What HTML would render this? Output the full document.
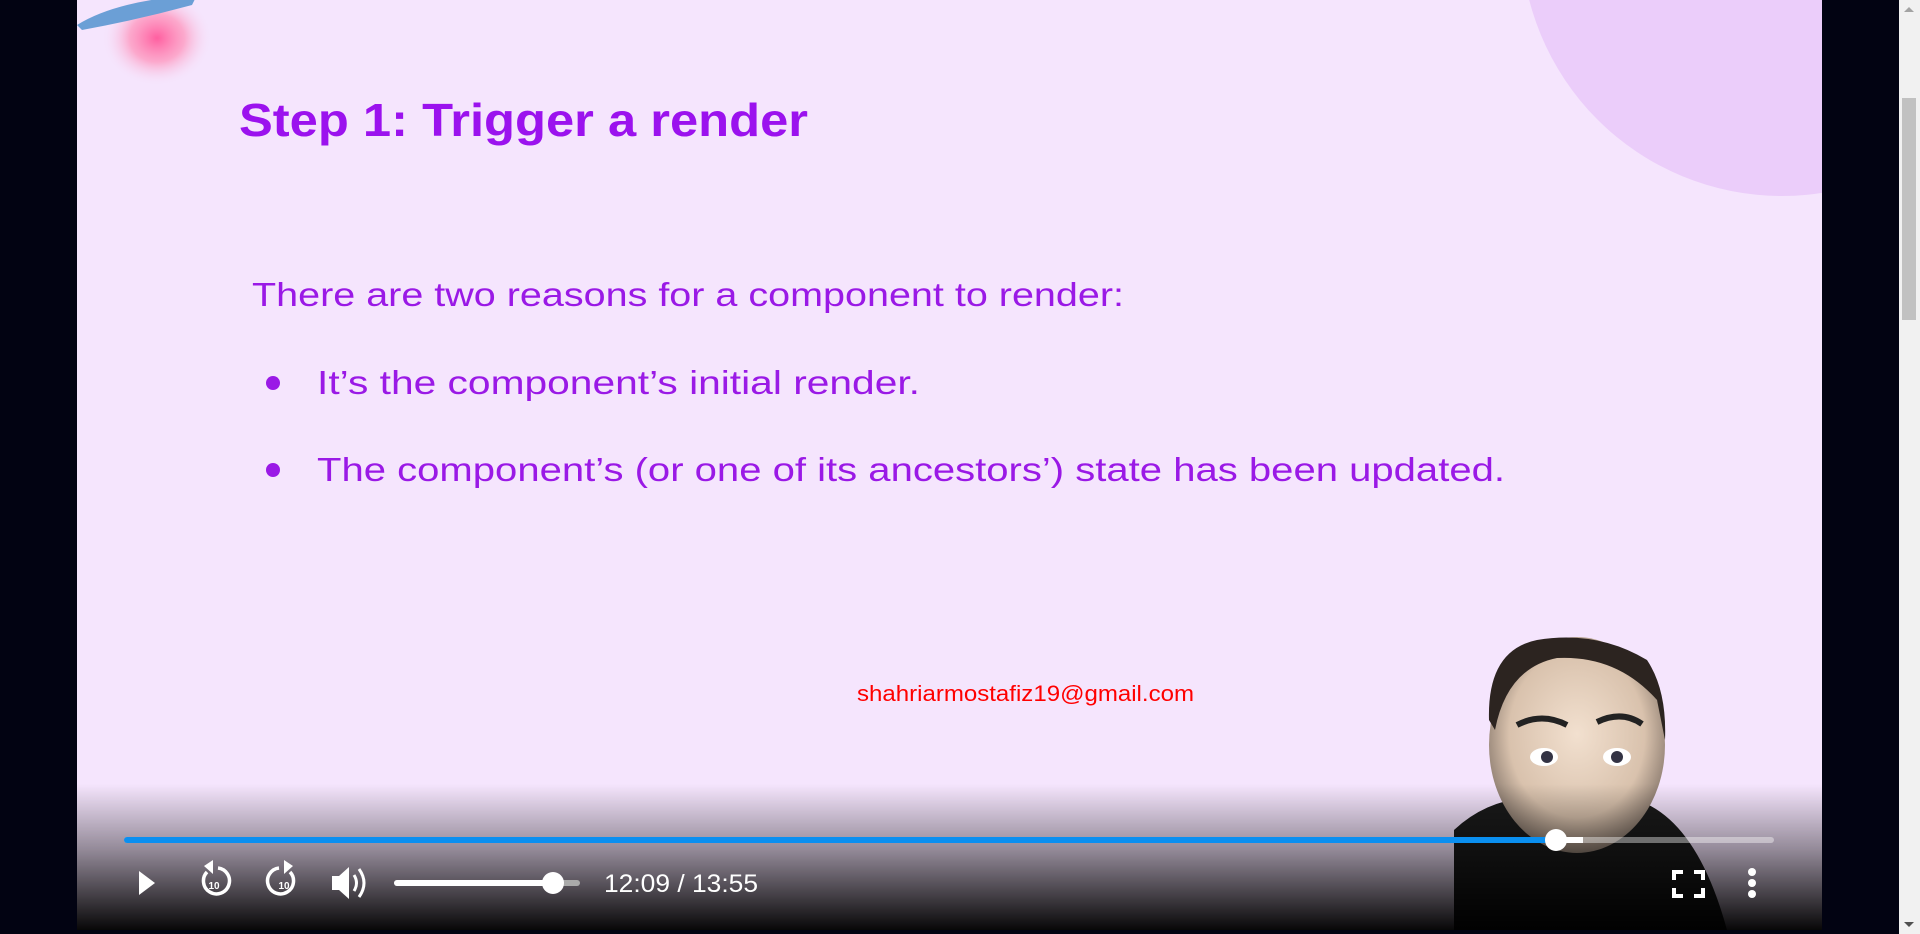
<!DOCTYPE html>
<html><head><meta charset="utf-8"><style>
html,body{margin:0;padding:0;width:1920px;height:934px;overflow:hidden;background:#020312;font-family:"Liberation Sans",sans-serif;}
#v{position:absolute;left:77px;top:0;width:1745px;height:930px;background:#f5e5fd;overflow:hidden;}
#sb{position:absolute;left:1899px;top:0;width:21px;height:934px;background:#f1f1f1;}
#thumb{position:absolute;left:1902px;top:98px;width:14px;height:222px;background:#c1c1c1;}
</style></head><body>
<div id="v">
<svg width="1745" height="930" style="position:absolute;left:0;top:0">
<defs>
<radialGradient id="glow" cx="0.5" cy="0.5" r="0.5"><stop offset="0" stop-color="#ff5fa0"/><stop offset="0.5" stop-color="#ff8fb8" stop-opacity="0.7"/><stop offset="1" stop-color="#f5e5fd" stop-opacity="0"/></radialGradient>
<linearGradient id="ctl" x1="0" y1="0" x2="0" y2="1"><stop offset="0" stop-color="#000" stop-opacity="0"/><stop offset="0.45" stop-color="#000" stop-opacity="0.4"/><stop offset="1" stop-color="#000" stop-opacity="0.97"/></linearGradient>
<radialGradient id="skin" cx="0.5" cy="0.45" r="0.55"><stop offset="0" stop-color="#f2e0cf"/><stop offset="0.7" stop-color="#d9c2ad"/><stop offset="1" stop-color="#8a7a6e"/></radialGradient>
</defs>
<circle cx="1705" cy="-65" r="261" fill="#ebcdfa"/>
<ellipse cx="80" cy="38" rx="55" ry="48" fill="url(#glow)"/>
<path d="M0 25 Q40 0 120 -5 L115 5 Q60 20 5 30 Z" fill="#6b9fd6"/>
<text x="162" y="136" font-family="Liberation Sans" font-weight="bold" font-size="46" fill="#9b12ee" textLength="569" lengthAdjust="spacingAndGlyphs">Step 1: Trigger a render</text>
<text x="175" y="306" font-family="Liberation Sans" font-size="33" fill="#9a19e6" textLength="872" lengthAdjust="spacingAndGlyphs">There are two reasons for a component to render:</text>
<circle cx="196" cy="383" r="7" fill="#9a19e6"/>
<text x="240" y="394" font-family="Liberation Sans" font-size="33" fill="#9a19e6" textLength="603" lengthAdjust="spacingAndGlyphs">It’s the component’s initial render.</text>
<circle cx="196" cy="470" r="7" fill="#9a19e6"/>
<text x="240" y="481" font-family="Liberation Sans" font-size="33" fill="#9a19e6" textLength="1188" lengthAdjust="spacingAndGlyphs">The component’s (or one of its ancestors’) state has been updated.</text>
<text x="780" y="701" font-family="Liberation Sans" font-size="22" fill="#f00" textLength="337" lengthAdjust="spacingAndGlyphs">shahriarmostafiz19@gmail.com</text>
<!-- person -->
<path d="M1377 930 L1377 830 Q1420 790 1480 800 L1560 800 Q1620 820 1650 930 Z" fill="#1a1a1a"/>
<ellipse cx="1500" cy="745" rx="88" ry="108" fill="url(#skin)"/>
<path d="M1412 720 Q1410 650 1460 640 Q1520 630 1570 660 Q1590 690 1588 740 L1580 700 Q1540 655 1480 658 Q1430 668 1418 730 Z" fill="#2c2420"/>
<path d="M1440 725 Q1465 712 1490 725" stroke="#222" stroke-width="6" fill="none"/>
<path d="M1520 722 Q1545 710 1565 724" stroke="#222" stroke-width="6" fill="none"/>
<ellipse cx="1467" cy="757" rx="14" ry="9" fill="#fff"/><circle cx="1470" cy="757" r="6" fill="#334"/>
<ellipse cx="1540" cy="757" rx="14" ry="9" fill="#fff"/><circle cx="1540" cy="757" r="6" fill="#334"/>
<rect x="0" y="784" width="1745" height="146" fill="url(#ctl)"/>
<!-- progress -->
<rect x="47" y="837" width="1650" height="6" rx="3" fill="#fff" fill-opacity="0.4"/>
<rect x="1478" y="837" width="28" height="6" fill="#fff"/>
<rect x="47" y="837" width="1432" height="6" rx="3" fill="#0a8ff0"/>
<circle cx="1479" cy="840" r="11" fill="#fff"/>
<!-- play -->
<path d="M62 871 L62 895 L78 883 Z" fill="#fff"/>
<g fill="none" stroke="#fff" stroke-width="3.5">
<path d="M130 872 A13 13 0 1 0 141 868"/><path d="M213 872 A13 13 0 1 1 202 868"/></g>
<path d="M127 866 L136 860 L136 874 Z" fill="#fff"/>
<path d="M216 866 L207 860 L207 874 Z" fill="#fff"/>
<text x="137" y="889" font-size="10" font-weight="bold" fill="#fff" text-anchor="middle">10</text>
<text x="207" y="889" font-size="10" font-weight="bold" fill="#fff" text-anchor="middle">10</text>
<!-- volume -->
<path d="M255 876 L262 876 L272 867 L272 899 L262 890 L255 890 Z" fill="#fff"/>
<path d="M277 875 Q282 883 277 891" stroke="#fff" stroke-width="3" fill="none"/>
<path d="M282 869 Q292 883 282 897" stroke="#fff" stroke-width="3" fill="none"/>
<rect x="317" y="880" width="186" height="6" rx="3" fill="#aaa"/>
<rect x="317" y="880" width="160" height="6" rx="3" fill="#fff"/>
<circle cx="476" cy="883" r="11" fill="#fff"/>
<text x="527" y="892" font-size="25" fill="#fff" textLength="154" lengthAdjust="spacingAndGlyphs">12:09 / 13:55</text>
<!-- fullscreen -->
<g stroke="#fff" stroke-width="4" fill="none">
<path d="M1597 880 L1597 872 L1606 872"/><path d="M1617 872 L1626 872 L1626 880"/>
<path d="M1597 888 L1597 896 L1606 896"/><path d="M1617 896 L1626 896 L1626 888"/></g>
<circle cx="1675" cy="872" r="4" fill="#fff"/><circle cx="1675" cy="883" r="4" fill="#fff"/><circle cx="1675" cy="894" r="4" fill="#fff"/>
</svg>
</div>
<div id="sb"></div><div id="thumb"></div>
<svg style="position:absolute;left:1902px;top:920px" width="14" height="10"><path d="M2 2 L12 2 L7 7 Z" fill="#505050"/></svg>
<svg style="position:absolute;left:1902px;top:4px" width="14" height="10"><path d="M2 8 L12 8 L7 3 Z" fill="#a3a3a3"/></svg>
</body></html>
